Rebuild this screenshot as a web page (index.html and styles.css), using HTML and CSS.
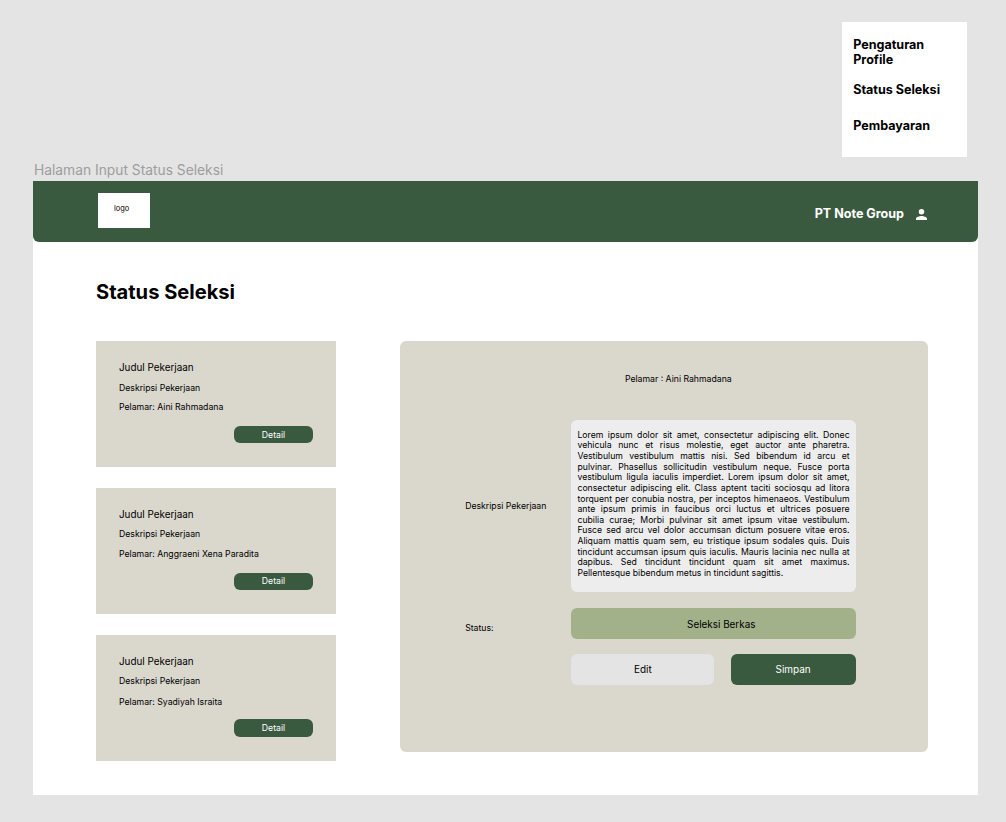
FILE: index.html
```html
<!DOCTYPE html>
<html lang="id">
<head>
<meta charset="utf-8">
<title>Status Seleksi</title>
<link rel="stylesheet" href="styles.css">
</head>
<body>
<nav class="menu">
  <a class="menu-item">Pengaturan<br>Profile</a>
  <a class="menu-item">Status Seleksi</a>
  <a class="menu-item">Pembayaran</a>
</nav>
<div class="frame-label">Halaman Input Status Seleksi</div>
<div class="frame">
  <header class="header">
    <div class="logo">logo</div>
    <div class="account">
      <span class="account-name">PT Note Group</span>
      <svg class="account-icon" viewBox="0 0 16 16"><path d="M8 8a4 4 0 1 0 0-8 4 4 0 0 0 0 8zM8 10c-2.67 0-8 1.34-8 4v2h16v-2c0-2.66-5.33-4-8-4z"/></svg>
    </div>
  </header>
  <main class="main">
    <h1 class="title">Status Seleksi</h1>
    <div class="columns">
      <section class="cards">
        <article class="card card-first">
          <h2 class="card-title">Judul Pekerjaan</h2>
          <p class="card-text">Deskripsi Pekerjaan</p>
          <p class="card-text">Pelamar: Aini Rahmadana</p>
          <button class="detail">Detail</button>
        </article>
        <article class="card">
          <h2 class="card-title">Judul Pekerjaan</h2>
          <p class="card-text">Deskripsi Pekerjaan</p>
          <p class="card-text">Pelamar: Anggraeni Xena Paradita</p>
          <button class="detail">Detail</button>
        </article>
        <article class="card card-last">
          <h2 class="card-title">Judul Pekerjaan</h2>
          <p class="card-text">Deskripsi Pekerjaan</p>
          <p class="card-text">Pelamar: Syadiyah Israita</p>
          <button class="detail">Detail</button>
        </article>
      </section>
      <section class="panel">
        <p class="applicant">Pelamar : Aini Rahmadana</p>
        <div class="form">
          <div class="label">Deskripsi Pekerjaan</div>
          <div class="description">Lorem ipsum dolor sit amet, consectetur adipiscing elit. Donec vehicula nunc et risus molestie, eget auctor ante pharetra. Vestibulum vestibulum mattis nisi. Sed bibendum id arcu et pulvinar. Phasellus sollicitudin vestibulum neque. Fusce porta vestibulum ligula iaculis imperdiet. Lorem ipsum dolor sit amet, consectetur adipiscing elit. Class aptent taciti sociosqu ad litora torquent per conubia nostra, per inceptos himenaeos. Vestibulum ante ipsum primis in faucibus orci luctus et ultrices posuere cubilia curae; Morbi pulvinar sit amet ipsum vitae vestibulum. Fusce sed arcu vel dolor accumsan dictum posuere vitae eros. Aliquam mattis quam sem, eu tristique ipsum sodales quis. Duis tincidunt accumsan ipsum quis iaculis. Mauris lacinia nec nulla at dapibus. Sed tincidunt tincidunt quam sit amet maximus. Pellentesque bibendum metus in tincidunt sagittis.</div>
          <div class="label label-status">Status:</div>
          <div class="status">Seleksi Berkas</div>
          <div class="actions">
            <button class="button button-edit">Edit</button>
            <button class="button button-save">Simpan</button>
          </div>
        </div>
      </section>
    </div>
  </main>
</div>
</body>
</html>
```
FILE: styles.css
```css
* { box-sizing: border-box; margin: 0; }
body {
  height: 822px;
  padding: 22px 27.7px 27px 33.3px;
  overflow: hidden;
  background: #e4e4e4;
  color: #000;
  font-family: Inter, "Liberation Sans", sans-serif;
  font-size: 8.7px;
  line-height: 10.63px;
}
button { border: 0; padding: 0; font-family: inherit; }
.menu {
  display: flex;
  flex-direction: column;
  width: 125px;
  height: 135px;
  margin-left: auto;
  margin-right: 11.3px;
  padding: 15px 11px 0 11.2px;
  background: #fff;
  font-size: 12.55px;
  font-weight: 700;
  line-height: 15px;
}
.menu-item + .menu-item { margin-top: 15px; }
.menu-item:last-child { margin-top: 20.6px; }
.frame-label {
  height: 24.3px;
  padding: 5px 0 0 .7px;
  color: #9d9d9d;
  font-size: 13.8px;
  line-height: 17px;
}
.frame { height: 613.7px; background: #fff; }
.header {
  display: flex;
  justify-content: space-between;
  height: 60.5px;
  padding: 12px 51.3px 0 64.5px;
  border-radius: 0 0 6px 6px;
  background: #3a5a40;
}
.logo {
  width: 52px;
  height: 35px;
  padding: 11px 0 0 16.2px;
  background: #fff;
  font-size: 7.4px;
}
.account {
  display: flex;
  align-items: center;
  gap: 12px;
  height: 42px;
  color: #fff;
  font-size: 12.55px;
  font-weight: 700;
}
.account-icon { width: 11px; height: 11px; margin-bottom: .4px; fill: #fff; }
.main { padding: 37.2px 50.2px 0 62.7px; }
.title { font-size: 20.1px; font-weight: 700; line-height: 26px; }
.columns { display: flex; justify-content: space-between; margin-top: 36.5px; }
.cards { display: flex; flex-direction: column; gap: 20.8px; width: 240px; }
.card {
  display: flex;
  flex-direction: column;
  height: 126px;
  padding: 19.5px 23px 0;
  background: #dad7cd;
}
.card-title { font-size: 9.9px; font-weight: 400; line-height: 13px; }
.card-text { margin-top: 9.4px; }
.card-title + .card-text { margin-top: 8.4px; }
.card-first .card-title + .card-text { margin-top: 9px; }
.card-first .card-text + .card-text { margin-top: 8.8px; }
.card-last .card-text + .card-text { margin-top: 10px; }
.card-last .detail { margin-top: 12px; }
.detail {
  width: 79px;
  height: 17.5px;
  margin-top: 12.7px;
  align-self: flex-end;
  border-radius: 6px;
  background: #3a5a40;
  color: #fff;
  font-size: 8.7px;
}
.card-first .detail { padding-top: 1px; }
.panel {
  width: 528.2px;
  height: 410.5px;
  padding: 32.3px 72.5px 0 65.2px;
  border-radius: 6px;
  background: #dad7cd;
}
.applicant { padding-left: 159.8px; }
.form {
  display: grid;
  grid-template-columns: 106.3px 284.2px;
  grid-template-rows: 172px 31px 31px;
  row-gap: 15.5px;
  margin-top: 35.8px;
}
.label { align-self: center; padding-top: .6px; }
.label-status { padding-top: 10px; }
.description {
  padding: 9.6px 6px 0;
  border-radius: 6px;
  background: #ededed;
  text-align: justify;
}
.status {
  padding-left: 15.5px;
  border-radius: 6px;
  background: #a3b18a;
  font-size: 9.9px;
  line-height: 33px;
  text-align: center;
}
.actions { display: flex; grid-column: 2; justify-content: space-between; }
.button { padding-bottom: 1.2px; border-radius: 6px; font-size: 9.95px; }
.button-edit { width: 143px; background: #e4e4e4; color: #000; }
.button-save { width: 125px; background: #3a5a40; color: #fff; }
```
